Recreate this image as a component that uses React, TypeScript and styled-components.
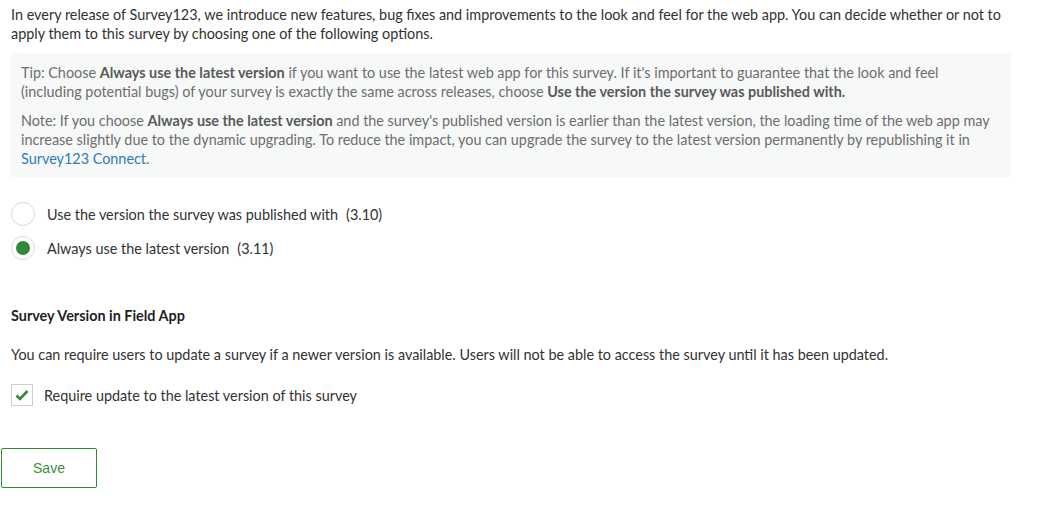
import React, { useState } from 'react';
import styled, { createGlobalStyle } from 'styled-components';

const GlobalStyle = createGlobalStyle`
  html, body {
    margin: 0;
    padding: 0;
    background: #ffffff;
  }
  body {
    font-family: Lato, "Noto Sans", sans-serif;
    color: #323232;
  }
`;

const Page = styled.div`
  width: 1000px;
  padding: 5px 0 0 11px;
  font-size: 14.4px;
  line-height: 19px;
`;

const Intro = styled.p`
  margin: 0;
`;

const TipBox = styled.div`
  margin-top: 10px;
  background-color: #f7f8f8;
  padding: 10px 10px 9px 10px;
  color: #6e6e6e;
`;

const TipPara = styled.p`
  margin: 0;

  & + & {
    margin-top: 10px;
  }

  b {
    font-weight: 700;
    color: #5a5a5a;
  }
`;

const Link = styled.a`
  color: #2c7cb9;
  text-decoration: none;
`;

const RadioGroup = styled.div`
  margin-top: 25px;
  display: flex;
  flex-direction: column;
  gap: 10px;
`;

const OptionRow = styled.label`
  display: flex;
  align-items: center;
  gap: 12px;
  cursor: pointer;
  color: #323232;
`;

const RadioCircle = styled.span<{ checked?: boolean }>`
  width: 24px;
  height: 24px;
  box-sizing: border-box;
  border: 1px solid #d9d9d9;
  border-radius: 50%;
  display: flex;
  align-items: center;
  justify-content: center;
  flex-shrink: 0;

  &::after {
    content: '';
    width: 14px;
    height: 14px;
    border-radius: 50%;
    background-color: ${p => (p.checked ? '#35883a' : 'transparent')};
  }
`;

const Version = styled.span`
  margin-left: 8px;
`;

const SectionTitle = styled.h3`
  margin: 46px 0 0 0;
  font-size: 14.4px;
  font-weight: 700;
  color: #1f1f1f;
`;

const SectionText = styled.p`
  margin: 20px 0 0 0;
`;

const CheckRow = styled.label`
  margin-top: 20px;
  display: flex;
  align-items: center;
  gap: 11px;
  cursor: pointer;
`;

const CheckBox = styled.span`
  width: 22px;
  height: 22px;
  box-sizing: border-box;
  border: 1px solid #cfcfcf;
  display: flex;
  align-items: center;
  justify-content: center;
  flex-shrink: 0;
`;

const SaveButton = styled.button`
  margin: 42px 0 0 -10px;
  width: 96px;
  height: 40px;
  background: #ffffff;
  border: 1px solid #2e8b2e;
  border-radius: 2px;
  color: #3d8f3d;
  font-family: "Liberation Sans", Arial, sans-serif;
  font-size: 14px;
  cursor: pointer;
`;

const App: React.FC = () => {
  const [version, setVersion] = useState<'published' | 'latest'>('latest');
  const [requireUpdate, setRequireUpdate] = useState(true);

  return (
    <>
      <GlobalStyle />
      <Page>
        <Intro>
          In every release of Survey123, we introduce new features, bug fixes and improvements to the look and feel for the web app. You can decide whether or not to apply them to this survey by choosing one of the following options.
        </Intro>

        <TipBox>
          <TipPara>
            Tip: Choose <b>Always use the latest version</b> if you want to use the latest web app for this survey. If it's important to guarantee that the look and feel (including potential bugs) of your survey is exactly the same across releases, choose <b>Use the version the survey was published with.</b>
          </TipPara>
          <TipPara>
            Note: If you choose <b>Always use the latest version</b> and the survey's published version is earlier than the latest version, the loading time of the web app may increase slightly due to the dynamic upgrading. To reduce the impact, you can upgrade the survey to the latest version permanently by republishing it in <Link href="#">Survey123 Connect</Link>.
          </TipPara>
        </TipBox>

        <RadioGroup>
          <OptionRow onClick={() => setVersion('published')}>
            <RadioCircle checked={version === 'published'} />
            <span>
              Use the version the survey was published with<Version>(3.10)</Version>
            </span>
          </OptionRow>
          <OptionRow onClick={() => setVersion('latest')}>
            <RadioCircle checked={version === 'latest'} />
            <span>
              Always use the latest version<Version>(3.11)</Version>
            </span>
          </OptionRow>
        </RadioGroup>

        <SectionTitle>Survey Version in Field App</SectionTitle>
        <SectionText>
          You can require users to update a survey if a newer version is available. Users will not be able to access the survey until it has been updated.
        </SectionText>

        <CheckRow onClick={() => setRequireUpdate(!requireUpdate)}>
          <CheckBox>
            {requireUpdate && (
              <svg width="14" height="12" viewBox="0 0 14 12">
                <path d="M1.5 6.5 L5 10 L12.5 2" fill="none" stroke="#35883a" strokeWidth="2.6" />
              </svg>
            )}
          </CheckBox>
          <span>Require update to the latest version of this survey</span>
        </CheckRow>

        <SaveButton>Save</SaveButton>
      </Page>
    </>
  );
};

export default App;
